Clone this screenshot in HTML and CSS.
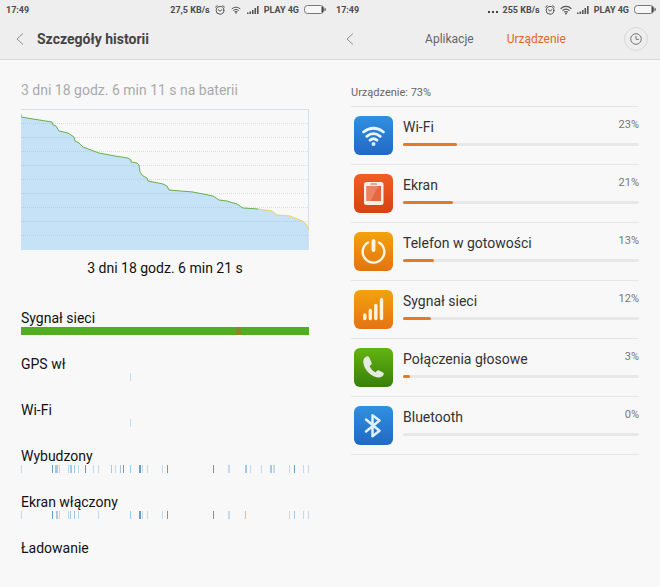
FILE: index.html
```
<!DOCTYPE html>
<html lang="pl">

<head>
	<meta charset="utf-8">
	<meta name="viewport" content="width=device-width, initial-scale=1">
	<title>Bateria</title>
	<link rel="stylesheet" href="styles.css">
</head>

<body>
	<!-- shared icons -->
	<svg class="defs" aria-hidden="true">
		<defs>
			<linearGradient id="blue" x1="0" y1="0" x2="0" y2="1"><stop offset="0" stop-color="#3090e0"/><stop offset="1" stop-color="#2268c4"/></linearGradient>
			<linearGradient id="red" x1="0" y1="0" x2="0" y2="1"><stop offset="0" stop-color="#f05e25"/><stop offset="1" stop-color="#d64212"/></linearGradient>
			<linearGradient id="orange" x1="0" y1="0" x2="0" y2="1"><stop offset="0" stop-color="#f2a30c"/><stop offset="1" stop-color="#e57313"/></linearGradient>
			<linearGradient id="green" x1="0" y1="0" x2="0" y2="1"><stop offset="0" stop-color="#63b410"/><stop offset="1" stop-color="#37800b"/></linearGradient>
		</defs>
		<symbol id="alarm" viewBox="0 0 10 10">
			<g fill="none" stroke="#555" stroke-linecap="round">
				<circle cx="5" cy="5.3" r="3.9"/>
				<path d="M3.3 4.8 5 6.2 7 4.6M.6 2 2.2.7M9.4 2 7.8.7"/>
			</g>
		</symbol>
		<symbol id="wifi" viewBox="0 0 12 10">
			<g fill="none" stroke="#555" stroke-width="1.2">
				<path d="M.6 3.7Q6-.9 11.4 3.7M2.4 5.6Q6 2.5 9.6 5.6M4.1 7.3Q6 5.7 7.9 7.3"/>
			</g>
			<circle cx="6" cy="8.6" r="1" fill="#555"/>
		</symbol>
		<symbol id="signal" viewBox="0 0 12 10">
			<path d="M0 7.5h1.6V9H0zM2.5 6.5h1.6V9H2.5zM5 5h1.6v4H5zM7.5 3h1.6v6H7.5zM10 1h1.6v8H10z" fill="#555"/>
		</symbol>
		<symbol id="battery" viewBox="0 0 22 9">
			<rect x=".5" y=".5" width="19" height="8" rx="3" fill="#f6f6f6" stroke="#777"/>
			<path d="M17.5 1.5h1.2q.8 1 .8 3t-.8 3h-1.2z" fill="#444"/>
			<path d="M20.5 2.5q1.3.5 1.3 2t-1.3 2z" fill="#555"/>
		</symbol>
		<symbol id="back" viewBox="0 0 8 12">
			<path d="M7 .5 1 6l6 5.500" fill="none" stroke="#8c8c8c"/>
		</symbol>
	</svg>

	<main class="screens">
		<section class="screen">
			<header class="top">
				<div class="status">
					<span class="time">17:49</span>
					<span>27,5 KB/s</span>
					<svg class="icoAlarm"><use href="#alarm"/></svg>
					<svg class="icoWifi small"><use href="#wifi"/></svg>
					<svg class="icoSignal"><use href="#signal"/></svg>
					<span>PLAY 4G</span>
					<svg class="icoBattery"><use href="#battery"/></svg>
				</div>
				<div class="bar">
					<button class="back" type="button" aria-label="Wstecz"><svg><use href="#back"/></svg></button>
					<h1 class="title">Szczegóły historii</h1>
				</div>
			</header>

			<div class="history">
				<p class="since">3 dni 18 godz. 6 min 11 s na baterii</p>
				<svg class="chart" viewBox="0 0 288 141" preserveAspectRatio="none">
					<path class="fill" d="M0 8 12 10 31 13 32 16 35 17 38 22 47 24 53 28 54 32 58 34 62 38 70 41 78 44 94 47 107 49 110 51 110 53 116 54 118 56 119 63 122 67 126 69 127 72 142 75 146 77 148 81 172 83 192 87 198 91 206 92 209 93 216 95 222 99 237 100 251 102 256 106 269 107 281 112 285 115 288 121V141H0z"/>
					<path class="grid" d="M0 14.500H288M0 28.500H288M0 42.500H288M0 56.500H288M0 70.500H288M0 84.500H288M0 98.500H288M0 112.500H288M0 126.500H288"/>
					<path class="frame" d="M0 .5H287.500V141"/>
					<path class="high" d="M0 5V8L12 10 31 13 32 16 35 17 38 22 47 24 53 28 54 32 58 34 62 38 70 41 78 44 94 47 107 49 110 51 110 53 116 54 118 56 119 63 122 67 126 69 127 72 142 75 146 77 148 81 172 83 192 87 198 91 206 92 209 93 216 95 222 99 237 100"/>
					<path class="mid" d="M237 100 251 102 256 106 269 107 281 112 285 115 288 121"/>
				</svg>
				<p class="total">3 dni 18 godz. 6 min 21 s</p>

				<ul class="events">
					<li>
						<h2>Sygnał sieci</h2>
						<svg class="ticks" viewBox="0 0 288 8" preserveAspectRatio="none">
							<path d="M0 0H288V8H0z" fill="#52ae1e"/>
							<path d="M215 0h5v8h-5z" fill="#848a25"/>
						</svg>
					</li>
					<li>
						<h2>GPS wł</h2>
						<svg class="ticks" viewBox="0 0 288 8" preserveAspectRatio="none">
							<path class="light" d="M109 0h1v8h-1z"/>
						</svg>
					</li>
					<li>
						<h2>Wi-Fi</h2>
						<svg class="ticks" viewBox="0 0 288 8" preserveAspectRatio="none">
							<path class="light" d="M109 0h1v8h-1z"/>
						</svg>
					</li>
					<li>
						<h2>Wybudzony</h2>
						<svg class="ticks" viewBox="0 0 288 8" preserveAspectRatio="none">
							<path class="light" d="M0 0h1v8H0zM38 0h1v8h-1zM47 0h1v8h-1zM57 0h1v8h-1zM72 0h1v8h-1zM77 0h1v8h-1zM94 0h1v8h-1zM121 0h1v8h-1zM126 0h1v8h-1zM141 0h1v8h-1zM207 0h2v8h-2zM229 0h1v8h-1zM240 0h1v8h-1zM252 0h2v8h-2zM268 0h1v8h-1zM282 0h1v8h-1zM287 0h1v8h-1z"/>
							<path class="soft" d="M34 0h3v8h-3zM49 0h2v8h-2zM53 0h1v8h-1zM90 0h1v8h-1zM99 0h1v8h-1zM109 0h1v8h-1zM224 0h2v8h-2zM249 0h2v8h-2z"/>
							<path class="dark" d="M31 0h1v8h-1zM64 0h1v8h-1zM102 0h1v8h-1zM118 0h2v8h-2zM146 0h1v8h-1zM192 0h1v8h-1zM273 0h1v8h-1z"/>
						</svg>
					</li>
					<li>
						<h2>Ekran włączony</h2>
						<svg class="ticks" viewBox="0 0 288 8" preserveAspectRatio="none">
							<path class="light" d="M0 0h1v8H0zM38 0h1v8h-1zM47 0h1v8h-1zM57 0h1v8h-1zM77 0h1v8h-1zM121 0h1v8h-1zM126 0h1v8h-1zM141 0h1v8h-1zM207 0h2v8h-2zM268 0h1v8h-1zM282 0h1v8h-1zM287 0h1v8h-1z"/>
							<path class="soft" d="M35 0h2v8h-2zM49 0h1v8h-1zM53 0h1v8h-1zM109 0h1v8h-1zM224 0h1v8h-1zM273 0h1v8h-1z"/>
							<path class="dark" d="M31 0h1v8h-1zM118 0h2v8h-2zM146 0h1v8h-1zM192 0h1v8h-1z"/>
						</svg>
					</li>
					<li>
						<h2>Ładowanie</h2>
					</li>
				</ul>
			</div>
		</section>

		<section class="screen">
			<header class="top">
				<div class="status">
					<span class="time">17:49</span>
					<svg class="icoDots" viewBox="0 0 11 9"><path d="M1 6h2v2H1zM5 6h2v2H5zM9 6h2v2H9z" fill="#444"/></svg>
					<span>255 KB/s</span>
					<svg class="icoAlarm"><use href="#alarm"/></svg>
					<svg class="icoWifi"><use href="#wifi"/></svg>
					<svg class="icoSignal"><use href="#signal"/></svg>
					<span>PLAY 4G</span>
					<svg class="icoBattery"><use href="#battery"/></svg>
				</div>
				<div class="bar">
					<button class="back" type="button" aria-label="Wstecz"><svg><use href="#back"/></svg></button>
					<nav class="tabs">
						<a href="#aplikacje">Aplikacje</a>
						<a class="active" href="#urzadzenie">Urządzenie</a>
					</nav>
					<button class="clock" type="button" aria-label="Historia">
						<svg viewBox="0 0 12 12"><g fill="none" stroke="#777"><circle cx="6" cy="6" r="5.300"/><path d="M6 2.800V6.300H9"/></g></svg>
					</button>
				</div>
			</header>

			<div class="usage">
				<h2 class="sum">Urządzenie: 73%</h2>
				<ul class="list">
					<li class="item">
						<svg class="icon" viewBox="0 0 39 39">
							<rect width="39" height="39" rx="6" fill="url(#blue)"/>
							<g fill="none" stroke="#eaf6ff" stroke-width="2.800" stroke-linecap="round">
								<path d="M9.500 16Q19.500 8.500 29.500 16M12.800 20.300Q19.500 14.900 26.200 20.300M16 24.200Q19.500 21.400 23 24.200"/>
							</g>
							<circle cx="19.500" cy="28" r="2" fill="#d9eeff"/>
						</svg>
						<div class="info">
							<div class="line"><span class="name">Wi-Fi</span><span class="percent">23%</span></div>
							<div class="track"><div class="level" style="width: 23%"></div></div>
						</div>
					</li>
					<li class="item">
						<svg class="icon" viewBox="0 0 39 39">
							<rect width="39" height="39" rx="6" fill="url(#red)"/>
							<rect x="10" y="8" width="19.500" height="23" rx="2.500" fill="#fdeee5"/>
							<path d="M12.500 12H27V27H12.500z" fill="#e4683f"/>
							<path d="M12.500 12H24.500L16.500 27H12.500z" fill="#ea8460"/>
							<path d="M17 10h5.500" stroke="#d9603a" stroke-width="1.200" stroke-linecap="round"/>
						</svg>
						<div class="info">
							<div class="line"><span class="name">Ekran</span><span class="percent">21%</span></div>
							<div class="track"><div class="level" style="width: 21%"></div></div>
						</div>
					</li>
					<li class="item">
						<svg class="icon" viewBox="0 0 39 39">
							<rect width="39" height="39" rx="6" fill="url(#orange)"/>
							<g fill="none" stroke="#fff5e0" stroke-linecap="round">
								<path d="M14 10.500A10.800 10.800 0 1 0 25 10.500" stroke-width="2.400"/>
								<path d="M19.500 8.800V18" stroke-width="3.800"/>
							</g>
						</svg>
						<div class="info">
							<div class="line"><span class="name">Telefon w gotowości</span><span class="percent">13%</span></div>
							<div class="track"><div class="level" style="width: 13%"></div></div>
						</div>
					</li>
					<li class="item">
						<svg class="icon" viewBox="0 0 39 39">
							<rect width="39" height="39" rx="6" fill="url(#orange)"/>
							<path d="M10.800 25v3.500M16.300 20.500v8M21.800 15.500v13M27.500 9.800v18.700" fill="none" stroke="#fff3dc" stroke-width="3.400" stroke-linecap="round"/>
						</svg>
						<div class="info">
							<div class="line"><span class="name">Sygnał sieci</span><span class="percent">12%</span></div>
							<div class="track"><div class="level" style="width: 12%"></div></div>
						</div>
					</li>
					<li class="item">
						<svg class="icon" viewBox="0 0 39 39">
							<rect width="39" height="39" rx="6" fill="url(#green)"/>
							<path d="M11.500 9Q9 10.500 9.200 14Q10 21 15.500 25.500Q21 30 26.500 29.300Q29.500 28.500 30 25.500Q29.500 24.500 24.500 22.300Q23.600 22 22.800 22.900L21.500 24.500Q17.500 22.500 15.500 18.200L17.300 16.500Q18 15.700 17.600 14.700L15 9Q14 7.700 11.500 9z" fill="#e6eae3"/>
						</svg>
						<div class="info">
							<div class="line"><span class="name">Połączenia głosowe</span><span class="percent">3%</span></div>
							<div class="track"><div class="level" style="width: 3%"></div></div>
						</div>
					</li>
					<li class="item">
						<svg class="icon" viewBox="0 0 39 39">
							<rect width="39" height="39" rx="6" fill="url(#blue)"/>
							<path d="M12 13.500 25.500 24.800 18.500 30.200V9.200L25.500 14.500 12 25.500" fill="none" stroke="#dff2ff" stroke-width="2.500" stroke-linecap="round" stroke-linejoin="round"/>
						</svg>
						<div class="info">
							<div class="line"><span class="name">Bluetooth</span><span class="percent">0%</span></div>
							<div class="track"><div class="level" style="width: 0%"></div></div>
						</div>
					</li>
				</ul>
			</div>
		</section>
	</main>
</body>

</html>
```
FILE: styles.css
```
:root {
	--back: #f8f8f8;
	--top: #eeeeee;
	--rule: #e6e6e6;
	--accent: #e47a26;
}

* {
	box-sizing: border-box;
}

body {
	margin: 0;
	background: var(--back);
	color: #111;
	font-family: Roboto, "Liberation Sans", sans-serif;
	font-size: 14px;
}

h1, h2, p, ul {
	margin: 0;
	padding: 0;
	font-weight: normal;
	list-style: none;
}

button {
	padding: 0;
	border: none;
	background: transparent;
}

svg {
	display: block;
}

.defs {
	position: absolute;
	width: 0;
	height: 0;
}

.screens {
	display: grid;
	grid-template-columns: 1fr 1fr;
	min-height: 100vh;
}

/* status bar and header */
.top {
	background: var(--top);
	border-bottom: 1px solid #dadada;
}

.status {
	display: flex;
	align-items: center;
	gap: 5px;
	height: 19px;
	padding: 0 4px 0 6px;
	color: #4c4c4c;
	font-size: 9px;
	font-weight: bold;
}

.time {
	margin-right: auto;
}

.icoAlarm {
	width: 10px;
	height: 10px;
}

.icoWifi {
	width: 12px;
	height: 10px;
}

.icoWifi.small {
	height: 8px;
}

.icoSignal {
	width: 12px;
	height: 10px;
}

.icoBattery {
	width: 22px;
	height: 9px;
}

.icoDots {
	width: 11px;
	height: 9px;
}

.bar {
	display: flex;
	align-items: center;
	height: 40px;
	padding: 0 12px 0 16px;
}

.back {
	padding-right: 13px;
}

.back svg {
	width: 8px;
	height: 12px;
}

.title {
	color: #444;
	font-size: 14px;
	font-weight: bold;
}

.tabs {
	display: flex;
	flex: 1;
	justify-content: center;
	gap: 33px;
}

.tabs a {
	color: #666;
	font-size: 12px;
	line-height: 20px;
	text-decoration: none;
}

.tabs .active {
	color: #e2672a;
}

.clock {
	display: flex;
	align-items: center;
	justify-content: center;
	width: 24px;
	height: 24px;
	border: 1px solid #d9d9d9;
	border-radius: 50%;
}

.clock svg {
	width: 12px;
	height: 12px;
}

/* left screen */
.history {
	padding: 20px 21px;
}

.since {
	color: #aaa;
	line-height: 20px;
}

.chart {
	width: 100%;
	height: 141px;
	margin-top: 9px;
}

.chart path {
	fill: none;
}

.chart .fill {
	fill: #c6e2f7;
}

.chart .grid {
	stroke: #98a8b4;
	stroke-opacity: 0.35;
	stroke-dasharray: 1 1;
}

.chart .frame {
	stroke: #d9dfe3;
}

.chart .high {
	stroke: #67b04e;
}

.chart .mid {
	stroke: #ecd35c;
}

.total {
	margin-top: 8px;
	line-height: 20px;
	text-align: center;
}

.events {
	display: grid;
	gap: 21px;
	margin-top: 32px;
}

.events h2 {
	font-size: 14px;
	line-height: 17px;
}

.ticks {
	width: 100%;
	height: 8px;
}

.light {
	fill: #c3d8ea;
}

.soft {
	fill: #a5c8e6;
}

.dark {
	fill: #619fd2;
}

/* right screen */
.usage {
	padding: 25px 21px;
}

.sum {
	color: #666;
	font-size: 11px;
	line-height: 16px;
}

.list {
	margin-top: 5px;
	border-top: 1px solid var(--rule);
}

.item {
	display: flex;
	align-items: center;
	gap: 10px;
	height: 58px;
	padding-left: 3px;
	border-bottom: 1px solid var(--rule);
}

.icon {
	flex: none;
	width: 39px;
	height: 39px;
}

.info {
	flex: 1;
	padding-bottom: 8px;
}

.line {
	display: flex;
	justify-content: space-between;
	margin-bottom: 6px;
}

.name {
	color: #333;
	line-height: 20px;
}

.percent {
	color: #777;
	font-size: 11px;
	line-height: 16px;
}

.track {
	height: 3px;
	border-radius: 2px;
	background: #e8e8e8;
}

.level {
	height: 3px;
	border-radius: 2px;
	background: var(--accent);
}
```
